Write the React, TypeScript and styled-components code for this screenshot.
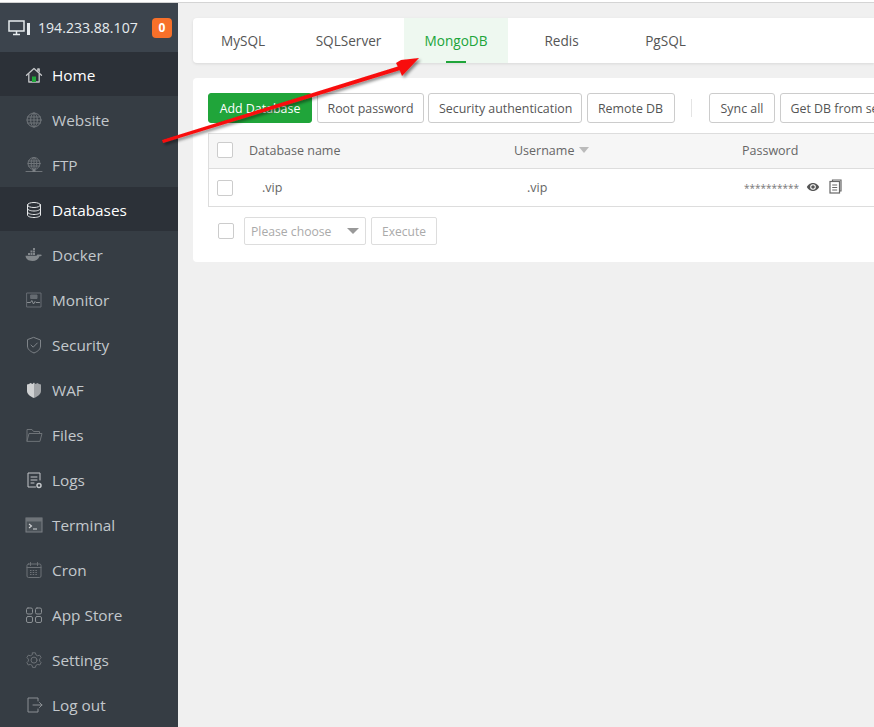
import React from "react";
import styled, { createGlobalStyle } from "styled-components";

const Global = createGlobalStyle`
  html, body { margin: 0; padding: 0; height: 100%; overflow: hidden; background: #fff; }
  #root { height: 100%; }
  * { box-sizing: border-box; }
`;

const Page = styled.div`
  position: relative;
  width: 874px;
  height: 727px;
  overflow: hidden;
  padding-top: 2px;
  font-family: "Open Sans", "Noto Sans", sans-serif;
`;
const TopRule = styled.div`
  height: 1px;
  background: #d4d4d4;
`;
const Shell = styled.div`
  display: flex;
  height: 724px;
`;
const Sidebar = styled.aside`
  flex: 0 0 178px;
  background: #363d44;
  display: flex;
  flex-direction: column;
`;
const ServerBar = styled.div`
  height: 50px;
  background: #3c444d;
  display: flex;
  align-items: center;
  padding: 0 6px 0 8px;
  color: #e6ebee;
  font-size: 14.1px;
`;
const ServerIp = styled.span`
  margin-left: 7px;
  flex: 1;
  white-space: nowrap;
`;
const Badge = styled.span`
  width: 20px;
  height: 20px;
  border-radius: 4px;
  background: #f7702a;
  color: #fff;
  font-size: 12px;
  font-weight: 700;
  display: flex;
  align-items: center;
  justify-content: center;
`;
const NavItem = styled.div<{ $active?: boolean }>`
  height: 45px;
  flex: 0 0 45px;
  display: flex;
  align-items: center;
  padding: 1px 0 0 25px;
  gap: 9px;
  font-size: 15.35px;
  color: ${(p) => (p.$active ? "#fff" : "#c3c8cc")};
  background: ${(p) => (p.$active ? "#2c3138" : "transparent")};
  background-clip: padding-box;
  border-bottom: 1px solid transparent;
`;
const IconSlot = styled.span`
  width: 18px;
  height: 18px;
  display: flex;
  flex: none;
  svg { display: block; }
`;
const Main = styled.main`
  flex: 1;
  min-width: 0;
  background: #f0f0f0;
  padding: 15px 0 0 15px;
  overflow: hidden;
`;
const TabCard = styled.nav`
  height: 45px;
  background: #fff;
  border-radius: 4px 0 0 4px;
  box-shadow: 0 1px 3px rgba(0, 0, 0, 0.1);
  display: flex;
`;
const Tab = styled.div<{ $active?: boolean; $w: number }>`
  position: relative;
  width: ${(p) => p.$w}px;
  height: 45px;
  display: flex;
  align-items: center;
  justify-content: center;
  font-size: 13.6px;
  color: ${(p) => (p.$active ? "#20a53a" : "#555")};
  background: ${(p) => (p.$active ? "#eef8f0" : "transparent")};
  ${(p) =>
    p.$active &&
    `&::after {
      content: "";
      position: absolute;
      left: 42px;
      bottom: 0;
      width: 20px;
      height: 2px;
      background: #20a53a;
    }`}
`;
const Card = styled.section`
  margin-top: 15px;
  height: 184px;
  width: 800px;
  background: #fff;
  border-radius: 4px 0 0 4px;
  padding: 15px 0 0 15px;
`;
const Toolbar = styled.div`
  display: flex;
  align-items: center;
  height: 30px;
  white-space: nowrap;
`;
const Btn = styled.button<{ $primary?: boolean; $w?: number }>`
  height: 30px;
  flex: none;
  width: ${(p) => (p.$w ? `${p.$w}px` : "auto")};
  margin-right: 4.5px;
  padding: 0 10px;
  border-radius: 3px;
  font-family: inherit;
  font-size: 12.4px;
  color: ${(p) => (p.$primary ? "#fff" : "#555")};
  background: ${(p) => (p.$primary ? "#20a53a" : "#fff")};
  border: 1px solid ${(p) => (p.$primary ? "#20a53a" : "#ccc")};
`;
const Divider = styled.span`
  width: 1px;
  height: 18px;
  background: #e4e4e4;
  margin: 0 17px 0 12px;
  flex: none;
`;
const Table = styled.div`
  margin-top: 10px;
  border: 1px solid #ddd;
  border-right: 0;
  width: 700px;
`;
const Row = styled.div<{ $head?: boolean }>`
  display: grid;
  grid-template-columns: 40px 265px 228px 1fr;
  align-items: center;
  height: ${(p) => (p.$head ? "35px" : "37px")};
  padding-bottom: ${(p) => (p.$head ? "2px" : "0")};
  background: ${(p) => (p.$head ? "#f6f6f6" : "#fff")};
  border-bottom: ${(p) => (p.$head ? "1px solid #ddd" : "0")};
  font-size: 12.5px;
  color: #666;
`;
const Check = styled.span`
  display: block;
  width: 16px;
  height: 16px;
  background: #fff;
  border: 1px solid #ccc;
  border-radius: 2px;
  margin-left: 8px;
`;
const Indented = styled.span<{ $x: number }>`
  padding-left: ${(p) => p.$x}px;
`;
const SortArrow = styled.span`
  display: inline-block;
  width: 0;
  height: 0;
  margin-left: 5px;
  vertical-align: 2px;
  border-left: 5.5px solid transparent;
  border-right: 5.5px solid transparent;
  border-top: 6px solid #bbb;
`;
const PasswordCell = styled.span`
  display: flex;
  align-items: center;
  padding-left: 2px;
  color: #777;
  font-size: 10px;
`;
const EyeIcon = styled.svg`
  margin-left: 7px;
  margin-top: -1px;
`;
const CopyIcon = styled.svg`
  margin-left: 9px;
  margin-top: -2px;
`;
const Batch = styled.div`
  display: flex;
  align-items: center;
  margin-top: 10px;
  height: 28px;
  padding-left: 10px;
`;
const BatchCheck = styled(Check)`
  margin: 0 10px 0 0;
`;
const Select = styled.div`
  width: 122px;
  height: 28px;
  border: 1px solid #ddd;
  border-radius: 2px;
  display: flex;
  align-items: center;
  justify-content: space-between;
  padding: 0 6px;
  font-size: 12.2px;
  color: #aaa;
  margin-right: 5px;
`;
const SelectArrow = styled(SortArrow)`
  margin: 0;
  vertical-align: 0;
  border-left-width: 6px;
  border-right-width: 6px;
  border-top: 6px solid #999;
`;
const GhostBtn = styled.div`
  width: 66px;
  height: 28px;
  border: 1px solid #ddd;
  border-radius: 2px;
  display: flex;
  align-items: center;
  justify-content: center;
  font-size: 12px;
  color: #aaa;
`;
const ArrowOverlay = styled.svg`
  position: absolute;
  left: 0;
  top: 0;
  pointer-events: none;
`;

const S = ({ children, c = "#7c8186" }: { children: React.ReactNode; c?: string }) => (
  <svg width="18" height="18" viewBox="0 0 18 18" fill="none" stroke={c} strokeWidth="1" strokeLinecap="round" strokeLinejoin="round">
    {children}
  </svg>
);

const icons: Record<string, React.ReactNode> = {
  Home: (
    <S c="#c4c6c8">
      <path strokeWidth="1.300" d="M1.500 9.300 9 2.500l7.500 6.800" />
      <path strokeWidth="1.300" d="M3.800 8v8h10.400V8" />
      <path strokeWidth="1.300" d="M12.800 4.500V3h1.400v2.800" />
      <rect x="7" y="10.500" width="4" height="5.500" fill="#20a53a" stroke="none" />
    </S>
  ),
  Website: (
    <S c="#6f7479">
      <circle cx="9" cy="9" r="7" />
      <ellipse cx="9" cy="9" rx="3.300" ry="7" />
      <path d="M2.500 6h13M2 9h14M2.500 12h13M9 2v14" />
    </S>
  ),
  FTP: (
    <S c="#6f7479">
      <circle cx="9" cy="7.500" r="6" />
      <ellipse cx="9" cy="7.500" rx="2.800" ry="6" />
      <path d="M3.500 5h11M3 7.500h12M3.500 10h11M9 1.500v12M1 15.500h16" />
      <rect x="7.500" y="13.500" width="3" height="2.500" fill="#7c8186" stroke="none" />
    </S>
  ),
  Databases: (
    <S c="#e6e8ea">
      <ellipse cx="9" cy="4" rx="6.500" ry="2.500" />
      <path d="M2.500 4v10c0 1.400 2.900 2.500 6.500 2.500s6.500-1.100 6.500-2.500V4" />
      <path d="M2.500 7.500C2.500 8.900 5.400 10 9 10s6.500-1.100 6.500-2.500M2.500 11c0 1.400 2.900 2.500 6.500 2.500s6.500-1.100 6.500-2.500" />
    </S>
  ),
  Docker: (
    <svg width="18" height="18" viewBox="0 0 18 18" fill="#83888c">
      <rect x="3" y="7" width="2" height="2" />
      <rect x="5.500" y="7" width="2" height="2" />
      <rect x="8" y="7" width="2" height="2" />
      <rect x="5.500" y="4.500" width="2" height="2" />
      <rect x="8" y="4.500" width="2" height="2" />
      <rect x="8" y="2" width="2" height="2" />
      <path d="M0.500 9.800h11c.4-1.200 1.600-1.500 2.600-1 .9-.5 2-.3 2.900.2-.5 1-1.500 1.400-2.500 1.300C13.500 13.500 11 15 7.500 15 3 15 1 13 .5 9.800z" />
    </svg>
  ),
  Monitor: (
    <S c="#666c72">
      <rect x="2" y="2" width="14" height="14" />
      <rect x="6" y="4" width="6" height="3.500" fill="#666c72" />
      <path d="M2.500 11.500h3l1.300-2 1.700 3.500 1.500-2.500 1 1h3.500" stroke="#8b9094" />
    </S>
  ),
  Security: (
    <S c="#7f8489">
      <path d="M9 1.500 15.500 4v6c0 3.500-3 5.500-6.500 7-3.500-1.500-6.500-3.500-6.500-7V4z" />
      <path d="m6 9 2.200 2.200L12.300 7" />
    </S>
  ),
  WAF: (
    <svg width="18" height="18" viewBox="0 0 18 18">
      <path d="M9 1.500 7.500 3 5.500 2 4 3 2 3.500V10c0 3.500 3.500 5.500 7 7z" fill="#cfd1d2" />
      <path d="M9 1.500 10.500 3l2-1L14 3l2 .5V10c0 3.500-3.500 5.500-7 7z" fill="#a0a3a6" />
    </svg>
  ),
  Files: (
    <S c="#6d7277">
      <path d="M2 15V3.500h5l1.500 2H14.500v2" />
      <path d="M2 15 4 7.500h13L15 15z" />
    </S>
  ),
  Logs: (
    <S c="#c3c6c9">
      <path d="M15 9V2H3v14h7.500" />
      <path d="M6 6h6M6 9h6M6 12h3" />
      <circle cx="14" cy="14.500" r="2" fill="#363d44" strokeWidth="1.500" />
    </S>
  ),
  Terminal: (
    <svg width="18" height="18" viewBox="0 0 18 18" fill="none">
      <rect x="1" y="2" width="16" height="14" fill="#4b5258" stroke="#7c8186" />
      <rect x="1" y="2" width="16" height="3.500" fill="#6f7479" />
      <path d="m4 8 2.500 2L4 12M8 13h4" stroke="#d4d6d8" strokeWidth="1.100" />
    </svg>
  ),
  Cron: (
    <S c="#6d7277">
      <rect x="2" y="3" width="14" height="13.500" rx="1.500" />
      <path d="M2 6.500h14M5.500 1.500v3M12.500 1.500v3" />
      <path d="M5 9.500h8M5 11.500h8M5 13.500h8" strokeDasharray="1.500 1.200" strokeLinecap="butt" />
    </S>
  ),
  "App Store": (
    <S c="#8b9094">
      <rect x="1.500" y="2" width="6" height="6" rx="1.500" />
      <rect x="10.500" y="2" width="6" height="6" rx="1.500" />
      <rect x="1.500" y="10.500" width="6" height="6" rx="1.500" />
      <rect x="10.500" y="10.500" width="6" height="6" rx="1.500" />
    </S>
  ),
  Settings: (
    <S c="#6d7277">
      <path d="M7.600 1.800h2.800l.5 2 1.800 1 2-.6 1.400 2.400-1.500 1.500v2l1.500 1.500-1.400 2.400-2-.6-1.800 1-.5 2H7.600l-.5-2-1.800-1-2 .6-1.400-2.400 1.500-1.500v-2L1.900 6.600l1.400-2.400 2 .6 1.800-1z" />
      <circle cx="9" cy="9.100" r="3" />
    </S>
  ),
  "Log out": (
    <S c="#8b9094">
      <path d="M13 5V2H3v14h10v-3" />
      <path d="M8 9h9M14.500 6.500 17 9l-2.500 2.500" />
    </S>
  ),
};

const items = ["Home", "Website", "FTP", "Databases", "Docker", "Monitor", "Security", "WAF", "Files", "Logs", "Terminal", "Cron", "App Store", "Settings", "Log out"];
const activeItems = ["Home", "Databases"];
const tabs: [string, number][] = [
  ["MySQL", 100],
  ["SQLServer", 111],
  ["MongoDB", 104],
  ["Redis", 107],
  ["PgSQL", 101],
];

export default function App() {
  return (
    <Page>
      <Global />
      <TopRule />
      <Shell>
        <Sidebar>
          <ServerBar>
            <svg width="23" height="16" viewBox="0 0 23 16" fill="none" stroke="#e6ebee" strokeWidth="1.500">
              <rect x="1" y="1" width="15" height="10" />
              <path d="M5 14.500h7M8.500 11v3.500" />
              <rect x="19" y="3" width="3" height="12" fill="#e6ebee" stroke="none" />
            </svg>
            <ServerIp>194.233.88.107</ServerIp>
            <Badge>0</Badge>
          </ServerBar>
          {items.map((name) => (
            <NavItem key={name} $active={activeItems.includes(name)}>
              <IconSlot>{icons[name]}</IconSlot>
              {name}
            </NavItem>
          ))}
        </Sidebar>
        <Main>
          <TabCard>
            {tabs.map(([name, w]) => (
              <Tab key={name} $w={w} $active={name === "MongoDB"}>
                {name}
              </Tab>
            ))}
          </TabCard>
          <Card>
            <Toolbar>
              <Btn $primary $w={104}>Add Database</Btn>
              <Btn $w={107}>Root password</Btn>
              <Btn $w={154}>Security authentication</Btn>
              <Btn $w={88}>Remote DB</Btn>
              <Divider />
              <Btn $w={66}>Sync all</Btn>
              <Btn>Get DB from server</Btn>
            </Toolbar>
            <Table>
              <Row $head>
                <Check />
                <span>Database name</span>
                <span>
                  Username
                  <SortArrow />
                </span>
                <span>Password</span>
              </Row>
              <Row>
                <Check />
                <Indented $x={13}>.vip</Indented>
                <Indented $x={13}>.vip</Indented>
                <PasswordCell>
                  **********
                  <EyeIcon width="14" height="12" viewBox="0 0 14 12">
                    <path d="M7 2C3.800 2 1.500 4.500.8 6c.7 1.500 3 4 6.200 4s5.500-2.500 6.200-4C12.500 4.500 10.200 2 7 2z" fill="#555" />
                    <circle cx="7" cy="6" r="2.800" fill="#fff" />
                    <circle cx="7" cy="6" r="1.800" fill="#555" />
                  </EyeIcon>
                  <CopyIcon width="13" height="15" viewBox="0 0 13 15" fill="none" stroke="#666" strokeWidth="1.200">
                    <path d="M3.500 2V1h8.500v11h-1.500" />
                    <rect x="1" y="2.500" width="9.500" height="11.500" fill="#fff" />
                    <path d="M3.200 6h5M3.200 8.500h5M3.200 11h5" />
                  </CopyIcon>
                </PasswordCell>
              </Row>
            </Table>
            <Batch>
              <BatchCheck />
              <Select>
                Please choose
                <SelectArrow />
              </Select>
              <GhostBtn>Execute</GhostBtn>
            </Batch>
          </Card>
        </Main>
      </Shell>
      <ArrowOverlay width="874" height="727" viewBox="0 0 874 727">
        <defs>
          <filter id="arrowShadow" x="-10%" y="-30%" width="120%" height="160%">
            <feDropShadow dx="2" dy="2" stdDeviation="1.500" floodColor="#000" floodOpacity="0.45" />
          </filter>
        </defs>
        <g filter="url(#arrowShadow)" fill="#f80d0d">
          <path d="M162 140 L401 65.500 L402 69.500 L163 143 Z" />
          <path d="M419 58 L402 76 L400 71 L396 63 L401 60 Z" />
        </g>
      </ArrowOverlay>
    </Page>
  );
}
